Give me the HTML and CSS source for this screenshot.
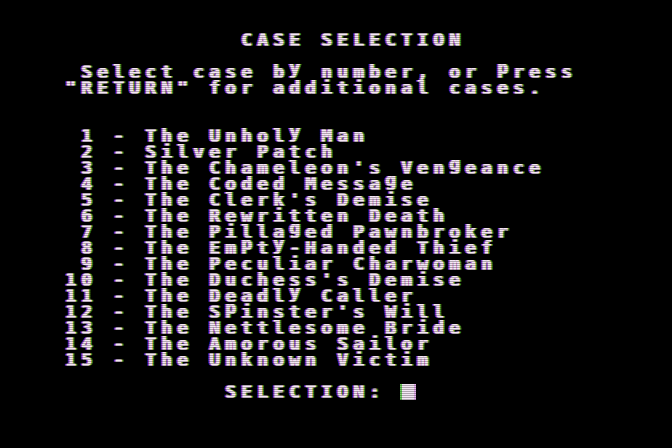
FILE: index.html
```html
<!DOCTYPE html>
<html lang="en">
<head>
<meta charset="utf-8">
<title>Case Selection</title>
<link rel="stylesheet" href="styles.css">
</head>
<body>
<main class="screen">
<div class="line">              CASE SELECTION</div>
<div class="line"></div>
<div class="line">    Select case b<span class="dsc">y</span> number, or <span class="dsc">p</span>ress</div>
<div class="line">   "RETURN" for additional cases.</div>
<div class="line"></div>
<div class="line"></div>
<div class="line">    1 - The Unhol<span class="dsc">y</span> Man</div>
<div class="line">    2 - Silver Patch</div>
<div class="line">    3 - The Chameleon's Ven<span class="dsc">g</span>eance</div>
<div class="line">    4 - The Coded Messa<span class="dsc">g</span>e</div>
<div class="line">    5 - The Clerk's Demise</div>
<div class="line">    6 - The Rewritten Death</div>
<div class="line">    7 - The Pilla<span class="dsc">g</span>ed Pawnbroker</div>
<div class="line">    8 - The Em<span class="dsc">p</span>t<span class="dsc">y</span>-Handed Thief</div>
<div class="line">    9 - The Peculiar Charwoman</div>
<div class="line">   10 - The Duchess's Demise</div>
<div class="line">   11 - The Deadl<span class="dsc">y</span> Caller</div>
<div class="line">   12 - The S<span class="dsc">p</span>inster's Will</div>
<div class="line">   13 - The Nettlesome Bride</div>
<div class="line">   14 - The Amorous Sailor</div>
<div class="line">   15 - The Unknown Victim</div>
<div class="line"></div>
<div class="line">             SELECTION: <span class="cursor"></span></div>
<div class="scanlines"></div>
</main>
</body>
</html>
```

FILE: styles.css
```css
html, body {
  margin: 0;
  padding: 0;
  background: #000;
}

/* 40 x 24 text page: each character cell is 16 x 16 */
.screen {
  position: relative;
  width: 672px;
  height: 448px;
  box-sizing: border-box;
  padding: 32px 16px 0 17px;
  background: #000;
  overflow: hidden;
  font-family: "DejaVu Sans Mono", "Liberation Mono", monospace;
  font-weight: bold;
  font-size: 18px;
  letter-spacing: 5.16px;
  color: #f6e8f6;
  /* widened strokes plus the colour fringe of the composite monitor */
  text-shadow:
    0.8px 0 0 #f6e8f6,
    -1.5px 0 0 rgba(214, 70, 220, 0.85),
    2.3px 0 0 rgba(60, 200, 70, 0.75);
}

.line {
  height: 16px;
  line-height: 16px;
  white-space: pre;
}

/* lowercase letters with descenders sit raised inside the cell */
.dsc {
  line-height: 0;
  vertical-align: 4px;
}

.cursor {
  display: inline-block;
  width: 16px;
  height: 16px;
  margin-left: -1px;
  vertical-align: top;
  background: #f4e6f4;
  box-shadow: inset 2px 0 0 #6ccc5c, inset -2px 0 0 #e6b0ee;
}

/* faint raster lines over the whole tube */
.scanlines {
  position: absolute;
  inset: 0;
  pointer-events: none;
  background: repeating-linear-gradient(to bottom, transparent 0 1px, rgba(0, 0, 0, 0.28) 1px 2px);
}
```
